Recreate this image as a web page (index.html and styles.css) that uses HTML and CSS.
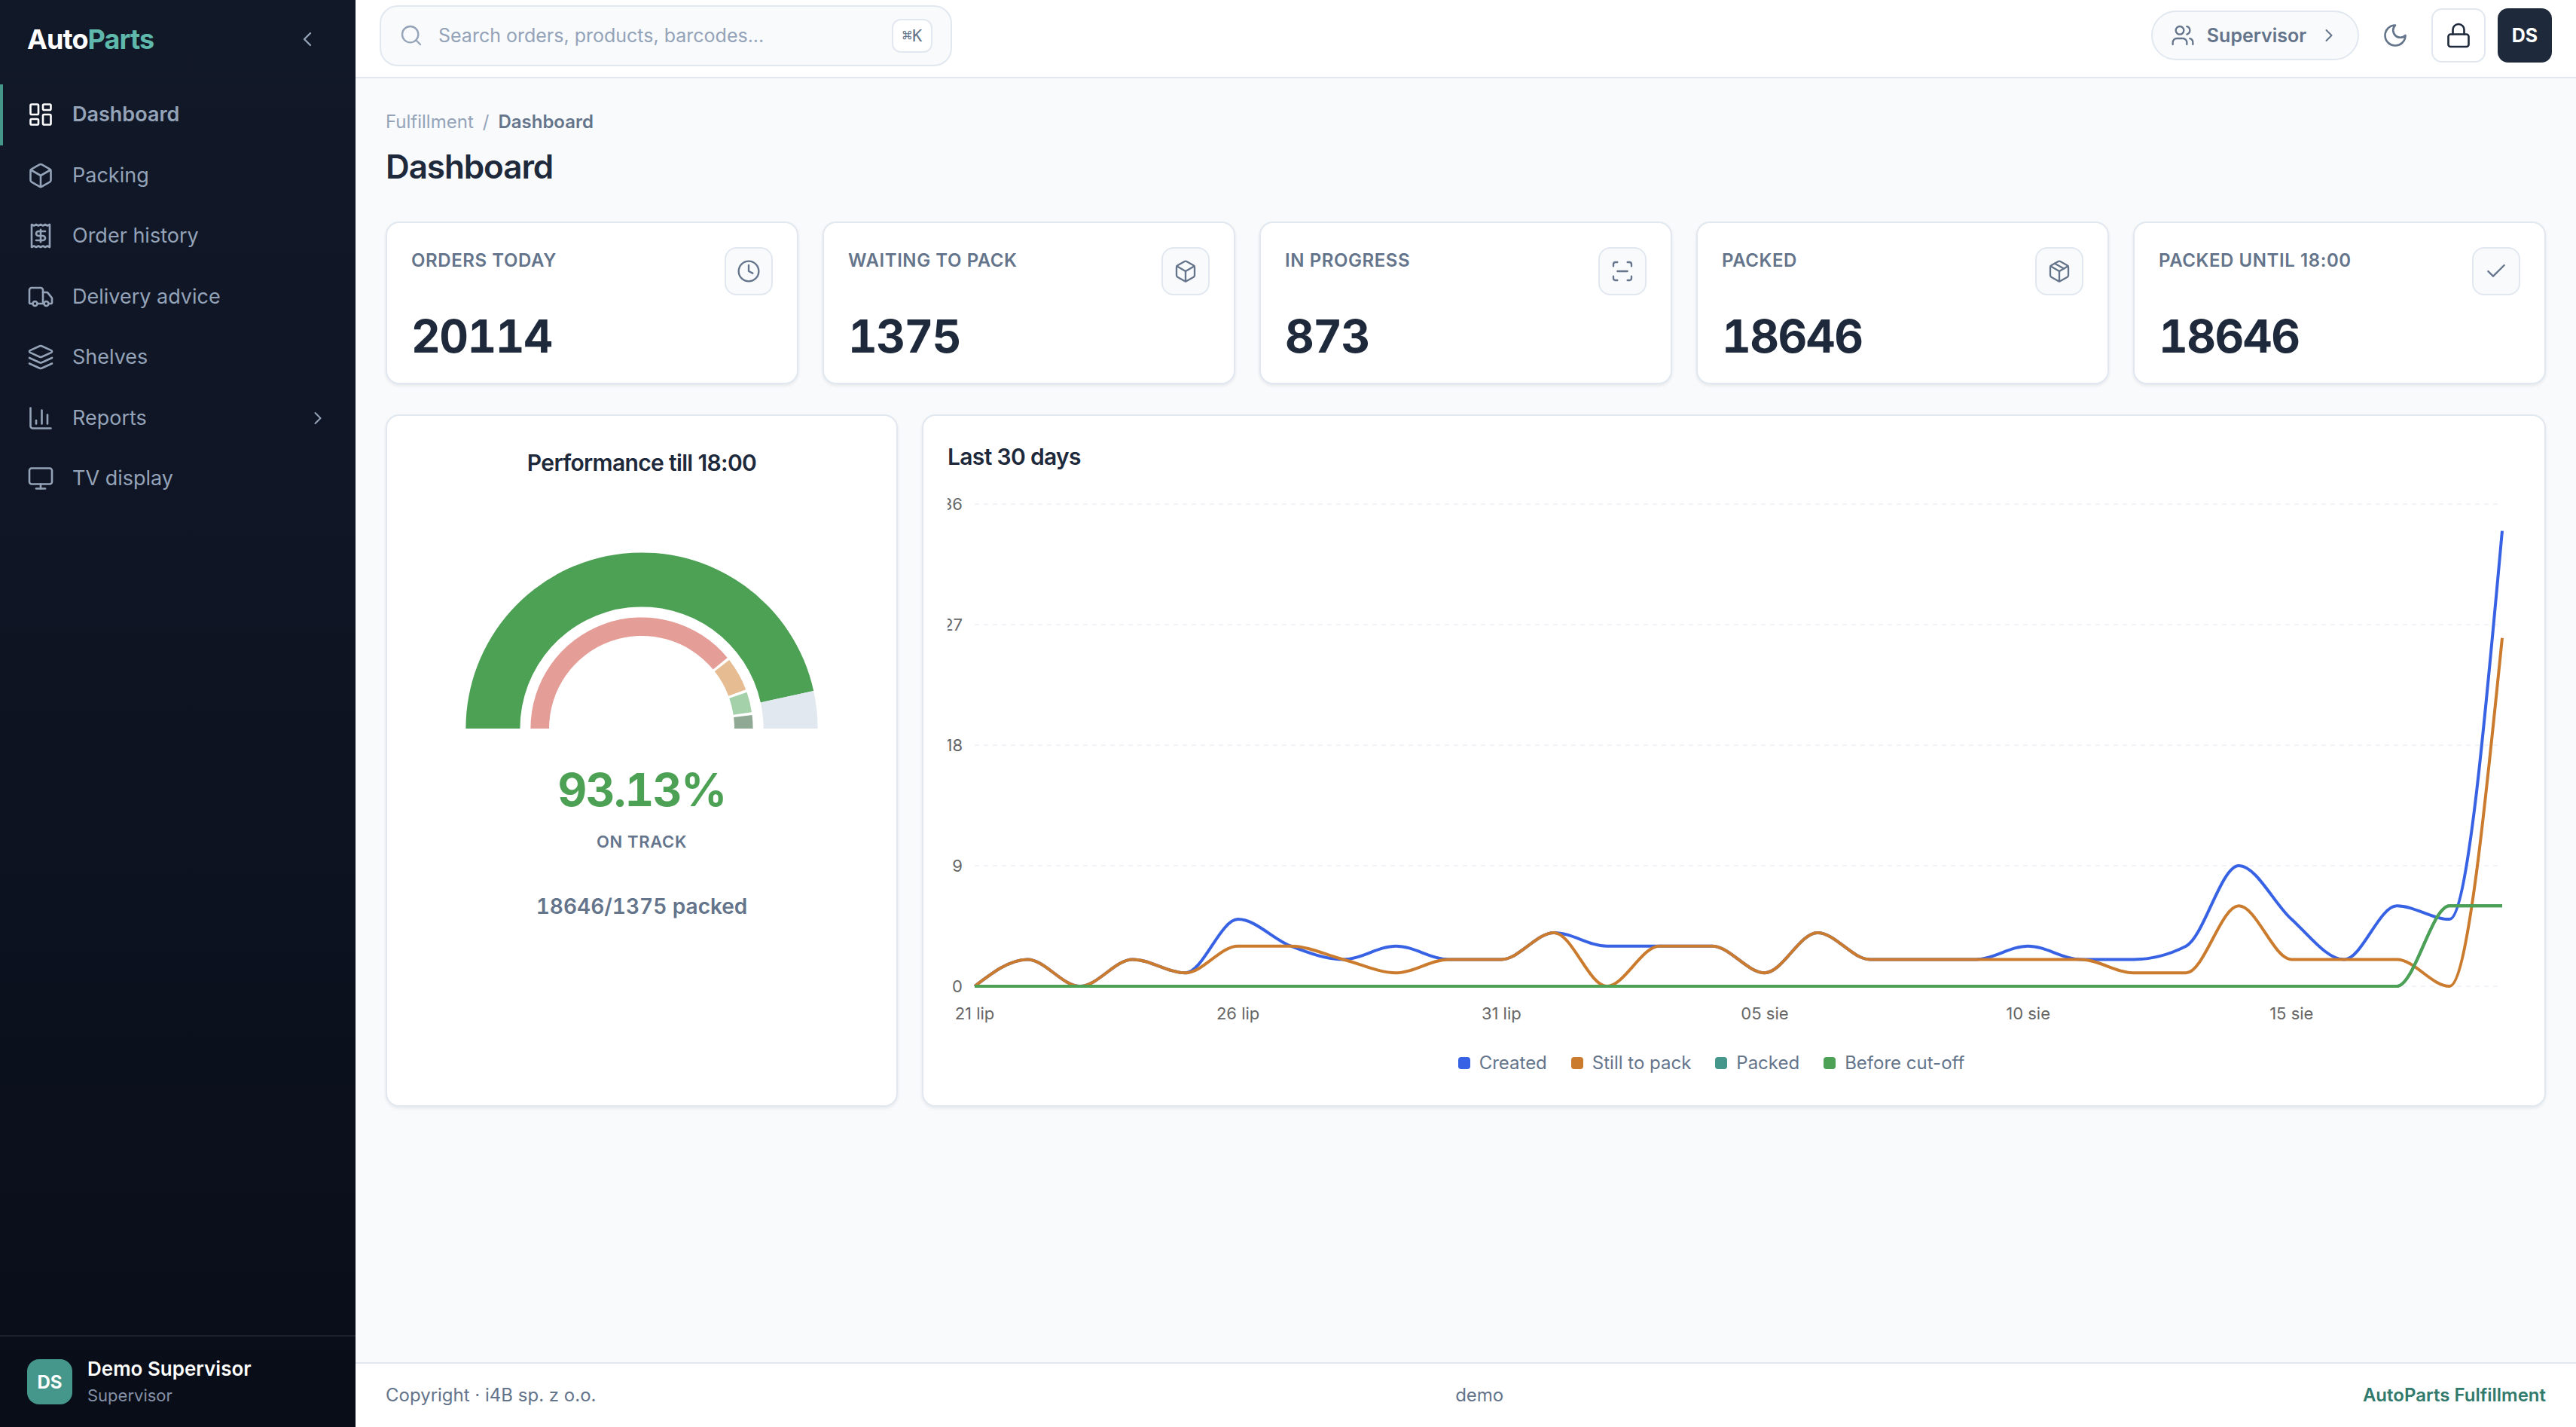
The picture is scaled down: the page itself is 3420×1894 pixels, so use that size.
FILE: index.html
```html
<!DOCTYPE html>
<html lang="en">
<head>
  <meta charset="utf-8">
  <title>AutoParts Fulfillment - Dashboard</title>
  <link rel="stylesheet" href="styles.css">
</head>
<body>
  <aside class="sidebar">
    <div class="sidebar-head">
      <div class="brand">Auto<span>Parts</span></div>
      <svg class="icon collapse" viewBox="0 0 24 24"><path d="m15 18-6-6 6-6"/></svg>
    </div>

    <nav class="nav">
      <a class="nav-item active">
        <svg class="icon" viewBox="0 0 24 24"><rect x="3" y="3" width="7" height="9" rx="1"/><rect x="14" y="3" width="7" height="5" rx="1"/><rect x="14" y="12" width="7" height="9" rx="1"/><rect x="3" y="16" width="7" height="5" rx="1"/></svg>
        <span>Dashboard</span>
      </a>
      <a class="nav-item">
        <svg class="icon" viewBox="0 0 24 24"><path d="M21 8a2 2 0 0 0-1-1.73l-7-4a2 2 0 0 0-2 0l-7 4A2 2 0 0 0 3 8v8a2 2 0 0 0 1 1.73l7 4a2 2 0 0 0 2 0l7-4A2 2 0 0 0 21 16Z"/><path d="m3.3 7 8.7 5 8.7-5"/><path d="M12 22V12"/></svg>
        <span>Packing</span>
      </a>
      <a class="nav-item">
        <svg class="icon" viewBox="0 0 24 24"><path d="M4 2v20l2-1 2 1 2-1 2 1 2-1 2 1 2-1 2 1V2l-2 1-2-1-2 1-2-1-2 1-2-1-2 1Z"/><path d="M16 8h-6a2 2 0 1 0 0 4h4a2 2 0 1 1 0 4H8"/><path d="M12 17.5v-11"/></svg>
        <span>Order history</span>
      </a>
      <a class="nav-item">
        <svg class="icon" viewBox="0 0 24 24"><path d="M14 18V6a2 2 0 0 0-2-2H4a2 2 0 0 0-2 2v11a1 1 0 0 0 1 1h2"/><path d="M15 18H9"/><path d="M19 18h2a1 1 0 0 0 1-1v-3.65a1 1 0 0 0-.22-.624l-3.48-4.35A1 1 0 0 0 17.52 8H14"/><circle cx="17" cy="18" r="2"/><circle cx="7" cy="18" r="2"/></svg>
        <span>Delivery advice</span>
      </a>
      <a class="nav-item">
        <svg class="icon" viewBox="0 0 24 24"><path d="m12.83 2.18a2 2 0 0 0-1.66 0L2.6 6.08a1 1 0 0 0 0 1.83l8.58 3.91a2 2 0 0 0 1.66 0l8.58-3.9a1 1 0 0 0 0-1.83Z"/><path d="m22 17.65-9.17 4.16a2 2 0 0 1-1.66 0L2 17.65"/><path d="m22 12.65-9.17 4.16a2 2 0 0 1-1.66 0L2 12.65"/></svg>
        <span>Shelves</span>
      </a>
      <a class="nav-item">
        <svg class="icon" viewBox="0 0 24 24"><path d="M3 3v16a2 2 0 0 0 2 2h16"/><path d="M18 17V9"/><path d="M13 17V5"/><path d="M8 17v-3"/></svg>
        <span>Reports</span>
        <svg class="icon caret" viewBox="0 0 24 24"><path d="m9 18 6-6-6-6"/></svg>
      </a>
      <a class="nav-item">
        <svg class="icon" viewBox="0 0 24 24"><rect x="2" y="3" width="20" height="14" rx="2"/><path d="M8 21h8"/><path d="M12 17v4"/></svg>
        <span>TV display</span>
      </a>
    </nav>

    <div class="sidebar-user">
      <div class="user-avatar">DS</div>
      <div>
        <div class="user-name">Demo Supervisor</div>
        <div class="user-role">Supervisor</div>
      </div>
    </div>
  </aside>

  <div class="main">
    <header class="topbar">
      <div class="search">
        <svg class="icon" viewBox="0 0 24 24"><circle cx="11" cy="11" r="8"/><path d="m21 21-4.3-4.3"/></svg>
        <span class="search-text">Search orders, products, barcodes...</span>
        <kbd>⌘K</kbd>
      </div>
      <div class="actions">
        <div class="role-pill">
          <svg class="icon" viewBox="0 0 24 24"><path d="M16 21v-2a4 4 0 0 0-4-4H6a4 4 0 0 0-4 4v2"/><circle cx="9" cy="7" r="4"/><path d="M22 21v-2a4 4 0 0 0-3-3.87"/><path d="M16 3.13a4 4 0 0 1 0 7.75"/></svg>
          <span>Supervisor</span>
          <svg class="icon caret" viewBox="0 0 24 24"><path d="m9 18 6-6-6-6"/></svg>
        </div>
        <div class="theme-btn">
          <svg class="icon" viewBox="0 0 24 24"><path d="M12 3a6 6 0 0 0 9 9 9 9 0 1 1-9-9Z"/></svg>
        </div>
        <div class="lock-btn">
          <svg class="icon" viewBox="0 0 24 24"><rect x="3" y="11" width="18" height="11" rx="2"/><path d="M7 11V7a5 5 0 0 1 10 0v4"/></svg>
        </div>
        <div class="top-avatar">DS</div>
      </div>
    </header>

    <main class="content">
      <div class="breadcrumb"><span>Fulfillment</span><span>/</span><b>Dashboard</b></div>
      <h1>Dashboard</h1>

      <section class="stats">
        <div class="stat">
          <div class="stat-head">
            <span class="stat-label">Orders today</span>
            <span class="stat-icon"><svg class="icon" viewBox="0 0 24 24"><circle cx="12" cy="12" r="10"/><path d="M12 6v6l4 2"/></svg></span>
          </div>
          <div class="stat-value">20114</div>
        </div>
        <div class="stat">
          <div class="stat-head">
            <span class="stat-label">Waiting to pack</span>
            <span class="stat-icon"><svg class="icon" viewBox="0 0 24 24"><path d="M21 8a2 2 0 0 0-1-1.73l-7-4a2 2 0 0 0-2 0l-7 4A2 2 0 0 0 3 8v8a2 2 0 0 0 1 1.73l7 4a2 2 0 0 0 2 0l7-4A2 2 0 0 0 21 16Z"/><path d="m3.3 7 8.7 5 8.7-5"/><path d="M12 22V12"/></svg></span>
          </div>
          <div class="stat-value">1375</div>
        </div>
        <div class="stat">
          <div class="stat-head">
            <span class="stat-label">In progress</span>
            <span class="stat-icon"><svg class="icon" viewBox="0 0 24 24"><path d="M3 7V5a2 2 0 0 1 2-2h2"/><path d="M17 3h2a2 2 0 0 1 2 2v2"/><path d="M21 17v2a2 2 0 0 1-2 2h-2"/><path d="M7 21H5a2 2 0 0 1-2-2v-2"/><path d="M7 12h10"/></svg></span>
          </div>
          <div class="stat-value">873</div>
        </div>
        <div class="stat">
          <div class="stat-head">
            <span class="stat-label">Packed</span>
            <span class="stat-icon"><svg class="icon" viewBox="0 0 24 24"><path d="M11 21.73a2 2 0 0 0 2 0l7-4A2 2 0 0 0 21 16V8a2 2 0 0 0-1-1.73l-7-4a2 2 0 0 0-2 0l-7 4A2 2 0 0 0 3 8v8a2 2 0 0 0 1 1.73z"/><path d="M12 22V12"/><path d="m3.3 7 8.7 5 8.7-5"/><path d="m7.5 4.27 9 5.15"/></svg></span>
          </div>
          <div class="stat-value">18646</div>
        </div>
        <div class="stat">
          <div class="stat-head">
            <span class="stat-label">Packed until 18:00</span>
            <span class="stat-icon"><svg class="icon" viewBox="0 0 24 24"><path d="M20 6 9 17l-5-5"/></svg></span>
          </div>
          <div class="stat-value">18646</div>
        </div>
      </section>

      <section class="panels">
        <div class="panel gauge-panel">
          <h2>Performance till 18:00</h2>
          <svg class="gauge" id="gauge" width="468" height="234" viewBox="-234 -234 468 234"></svg>
          <div class="gauge-value">93.13%</div>
          <div class="gauge-status">On track</div>
          <div class="gauge-count">18646/1375 packed</div>
        </div>
        <div class="panel chart-panel">
          <h2>Last 30 days</h2>
          <svg class="chart" id="chart" width="2088" height="728" viewBox="0 0 2088 728"></svg>
          <div class="legend">
            <span><i class="created"></i>Created</span>
            <span><i class="waiting"></i>Still to pack</span>
            <span><i class="packed"></i>Packed</span>
            <span><i class="cutoff"></i>Before cut-off</span>
          </div>
        </div>
      </section>
    </main>

    <footer class="footer">
      <span>Copyright · i4B sp. z o.o.</span>
      <span>demo</span>
      <b>AutoParts Fulfillment</b>
    </footer>
  </div>

  <script src="charts.js"></script>
</body>
</html>
```
FILE: styles.css
```css
* {
  box-sizing: border-box;
}

body {
  margin: 0;
  display: flex;
  height: 100vh;
  overflow: hidden;
  background: #f8fafc;
  color: #1e293b;
  font-family: Inter, "Liberation Sans", sans-serif;
  font-size: 26px;
}

.icon {
  width: 36px;
  height: 36px;
  flex: none;
  fill: none;
  stroke: currentColor;
  stroke-width: 1.75;
  stroke-linecap: round;
  stroke-linejoin: round;
}

/* sidebar */
.sidebar {
  width: 472px;
  flex: none;
  display: flex;
  flex-direction: column;
  background: linear-gradient(180deg, #111827 0%, #0f1524 40%, #090d18 100%);
  color: #94a3b8;
}

.sidebar-head {
  height: 104px;
  padding: 0 48px 0 36px;
  display: flex;
  align-items: center;
  justify-content: space-between;
}

.brand {
  color: #fff;
  font-size: 36px;
  font-weight: 700;
  letter-spacing: -0.025em;
}

.brand span {
  color: #5eb8ac;
}

.collapse {
  width: 32px;
  height: 32px;
}

.nav {
  flex: 1;
  padding-top: 8px;
}

.nav-item {
  height: 80.5px;
  padding: 0 36px 0 32px;
  border-left: 4px solid transparent;
  display: flex;
  align-items: center;
  gap: 24px;
  font-size: 27px;
  line-height: 40px;
}

.nav-item.active {
  border-left-color: #45978b;
  font-weight: 600;
}

.nav-item.active .icon {
  color: #fff;
}

.nav-item .caret {
  width: 28px;
  height: 28px;
  margin-left: auto;
}

.sidebar-user {
  height: 122px;
  padding: 0 36px;
  border-top: 2px solid #1c212d;
  display: flex;
  align-items: center;
  gap: 20px;
}

.user-avatar {
  width: 60px;
  height: 60px;
  border-radius: 16px;
  background: #45978b;
  color: #fff;
  font-size: 24px;
  font-weight: 700;
  display: flex;
  align-items: center;
  justify-content: center;
}

.user-name {
  color: #fff;
  font-size: 26px;
  line-height: 36px;
  font-weight: 600;
}

.user-role {
  font-size: 22px;
  line-height: 34px;
  color: #8490a6;
}

/* top bar */
.main {
  flex: 1;
  min-width: 0;
  display: flex;
  flex-direction: column;
}

.topbar {
  height: 104px;
  padding: 0 32px 8px;
  background: #fff;
  border-bottom: 2px solid #e2e8f0;
  display: flex;
  align-items: center;
  justify-content: space-between;
  color: #64748b;
}

.search {
  width: 760px;
  height: 81px;
  padding: 0 24px;
  border: 2px solid #e2e8f0;
  border-radius: 24px;
  background: #f8fafc;
  color: #94a3b8;
  display: flex;
  align-items: center;
  gap: 20px;
}

.search .icon {
  width: 32px;
  height: 32px;
}

.search-text {
  flex: 1;
  font-size: 25px;
}

kbd {
  width: 54px;
  height: 45px;
  border: 2px solid #e2e8f0;
  border-radius: 12px;
  background: #fff;
  color: #64748b;
  font: 22px "DejaVu Sans Mono", monospace;
  display: flex;
  align-items: center;
  justify-content: center;
}

.actions {
  display: flex;
  align-items: center;
  gap: 16px;
}

.role-pill {
  width: 276px;
  height: 66px;
  padding: 0 24px;
  border: 2px solid #e2e8f0;
  border-radius: 33px;
  background: #f8fafc;
  font-size: 25px;
  font-weight: 600;
  display: flex;
  align-items: center;
  justify-content: space-between;
}

.role-pill .icon {
  width: 32px;
  height: 32px;
}

.role-pill .caret {
  width: 28px;
  height: 28px;
}

.theme-btn,
.lock-btn,
.top-avatar {
  width: 72px;
  height: 72px;
  border-radius: 14px;
  display: flex;
  align-items: center;
  justify-content: center;
}

.theme-btn {
  width: 64px;
}

.lock-btn {
  border: 2px solid #e2e8f0;
  color: #1e293b;
}

.top-avatar {
  background: #1e293b;
  color: #fff;
  font-size: 25px;
  font-weight: 700;
}

/* page */
.content {
  flex: 1;
  padding: 40px 40px 0;
}

.breadcrumb {
  display: flex;
  gap: 12px;
  font-size: 24px;
  line-height: 36px;
  color: #94a3b8;
}

.breadcrumb b {
  color: #64748b;
  font-weight: 600;
}

h1 {
  margin: 14px 0 46px;
  font-size: 44px;
  line-height: 54px;
  font-weight: 600;
  letter-spacing: -0.025em;
}

.stats {
  display: grid;
  grid-template-columns: repeat(5, 1fr);
  gap: 32px;
}

.stat,
.panel {
  background: #fff;
  border: 2px solid #e2e8f0;
  border-radius: 18px;
  box-shadow: 0 2px 4px rgba(15, 23, 42, 0.08);
}

.stat {
  height: 216px;
  padding: 32px;
}

.stat-head {
  display: flex;
  justify-content: space-between;
}

.stat-label {
  font-size: 24px;
  line-height: 36px;
  font-weight: 600;
  letter-spacing: 0.024em;
  text-transform: uppercase;
  color: #64748b;
}

.stat-icon {
  width: 64px;
  height: 64px;
  border: 2px solid #e2e8f0;
  border-radius: 16px;
  background: #f8fafc;
  color: #64748b;
  display: flex;
  align-items: center;
  justify-content: center;
}

.stat-icon .icon {
  width: 32px;
  height: 32px;
}

.stat-value {
  margin-top: 24px;
  font-size: 60px;
  line-height: 60px;
  font-weight: 700;
  letter-spacing: -0.025em;
  font-variant-numeric: tabular-nums;
}

.panels {
  margin-top: 40px;
  display: grid;
  grid-template-columns: 680px 1fr;
  gap: 32px;
}

.panel {
  height: 919px;
  padding: 32px;
}

h2 {
  margin: 0;
  font-size: 30px;
  line-height: 45px;
  font-weight: 600;
  letter-spacing: -0.022em;
}

.gauge-panel {
  padding-top: 40px;
  display: flex;
  flex-direction: column;
  align-items: center;
}

.gauge {
  margin-top: 96px;
}

.gauge-value {
  margin-top: 45px;
  font-size: 60px;
  line-height: 72px;
  font-weight: 700;
  letter-spacing: -0.025em;
  font-variant-numeric: tabular-nums;
  color: #4ca154;
}

.gauge-status {
  margin-top: 16px;
  font-size: 22px;
  line-height: 34px;
  font-weight: 600;
  letter-spacing: 0.03em;
  text-transform: uppercase;
  color: #64748b;
}

.gauge-count {
  margin-top: 48px;
  font-size: 28px;
  line-height: 42px;
  font-weight: 600;
  font-variant-numeric: tabular-nums;
  color: #64748b;
}

.gauge .done { fill: #4ca154; }
.gauge .rest { fill: #e2e8f0; }
.gauge .low { fill: #e59d97; }
.gauge .mid { fill: #e6bd93; }
.gauge .good { fill: #a5d1aa; }
.gauge .top { fill: #90a994; }

.chart {
  display: block;
  margin-top: 8px;
  overflow: hidden;
}

.chart text {
  font-size: 22px;
  fill: #666;
}

.chart .grid {
  stroke: #f1f3f8;
  stroke-width: 2;
  stroke-dasharray: 6 6;
}

.chart path {
  fill: none;
  stroke-width: 4;
}

.chart .created { stroke: #3862e4; }
.chart .waiting { stroke: #cb7b2d; }
.chart .packed { stroke: #45978b; }
.chart .cutoff { stroke: #4ca154; }

.legend {
  margin-top: 28px;
  padding-right: 60px;
  display: flex;
  justify-content: center;
  gap: 32px;
  font-size: 24px;
  line-height: 36px;
  color: #64748b;
}

.legend span {
  display: flex;
  align-items: center;
  gap: 12px;
}

.legend i {
  width: 16px;
  height: 16px;
  border-radius: 4px;
}

.legend .created { background: #3862e4; }
.legend .waiting { background: #cb7b2d; }
.legend .packed { background: #45978b; }
.legend .cutoff { background: #4ca154; }

.footer {
  height: 86px;
  padding: 0 40px 2px;
  background: #fff;
  border-top: 2px solid #e2e8f0;
  display: flex;
  align-items: center;
  justify-content: space-between;
  font-size: 24px;
  color: #64748b;
}

.footer b {
  color: #317a6c;
  font-weight: 600;
}
```
FILE: charts.js
```js
const NS = "http://www.w3.org/2000/svg";

function add(svg, name, attrs, text) {
  const el = document.createElementNS(NS, name);
  for (const key in attrs) el.setAttribute(key, attrs[key]);
  if (text !== undefined) el.textContent = text;
  svg.appendChild(el);
}

// gauge: angles in degrees, 180 is left and 0 is right
const gauge = document.querySelector("#gauge");

function arc(cls, from, to, outer, inner) {
  const point = (deg, r) => {
    const a = deg * Math.PI / 180;
    return (r * Math.cos(a)).toFixed(2) + " " + (-r * Math.sin(a)).toFixed(2);
  };
  add(gauge, "path", {
    class: cls,
    d: `M${point(from, outer)}A${outer} ${outer} 0 0 1 ${point(to, outer)}` +
       `L${point(to, inner)}A${inner} ${inner} 0 0 0 ${point(from, inner)}Z`,
  });
}

arc("done", 180, 12.37, 233.6, 161.6);
arc("rest", 12.37, 0, 233.6, 161.6);
arc("low", 180, 39.6, 147.6, 123);
arc("mid", 38.1, 20.55, 147.6, 123);
arc("good", 19.05, 8.52, 147.6, 123);
arc("top", 7.02, 0, 147.6, 123);

// line chart
const chart = document.querySelector("#chart");
const left = 36, right = 2064, bottom = 672, unit = 640 / 36;
const step = (right - left) / 29;

for (const v of [0, 9, 18, 27, 36]) {
  const y = bottom - v * unit;
  add(chart, "line", { class: "grid", x1: left, x2: right, y1: y, y2: y });
  add(chart, "text", { x: 20, y: y + 8, "text-anchor": "end" }, v);
}

["21 lip", "26 lip", "31 lip", "05 sie", "10 sie", "15 sie"].forEach((label, i) => {
  add(chart, "text", { x: left + i * 5 * step, y: bottom + 44, "text-anchor": "middle" }, label);
});

// monotone cubic, so the curve never overshoots a value
function curve(values) {
  const pts = values.map((v, i) => [left + i * step, bottom - v * unit]);
  const n = pts.length;
  const slope = (i) => (pts[i + 1][1] - pts[i][1]) / step;
  const t = [];
  for (let i = 1; i < n - 1; i++) {
    const a = slope(i - 1), b = slope(i);
    t[i] = (Math.sign(a) + Math.sign(b)) * Math.min(Math.abs(a), Math.abs(b), Math.abs(a + b) / 4) || 0;
  }
  t[0] = (3 * slope(0) - t[1]) / 2;
  t[n - 1] = (3 * slope(n - 2) - t[n - 2]) / 2;
  let d = `M${pts[0]}`;
  for (let i = 1; i < n; i++) {
    const [x0, y0] = pts[i - 1], [x1, y1] = pts[i], k = step / 3;
    d += `C${x0 + k},${y0 + k * t[i - 1]},${x1 - k},${y1 - k * t[i]},${x1},${y1}`;
  }
  return d;
}

const zeros = new Array(28).fill(0);
const series = {
  created: [0, 2, 0, 2, 1, 5, 3, 2, 3, 2, 2, 4, 3, 3, 3, 1, 4, 2, 2, 2, 3, 2, 2, 3, 9, 5, 2, 6, 5, 34],
  waiting: [0, 2, 0, 2, 1, 3, 3, 2, 1, 2, 2, 4, 0, 3, 3, 1, 4, 2, 2, 2, 2, 2, 1, 1, 6, 2, 2, 2, 0, 26],
  packed: [...zeros, 6, 6],
  cutoff: [...zeros, 6, 6],
};

for (const name in series) {
  add(chart, "path", { class: name, d: curve(series[name]) });
}
```
